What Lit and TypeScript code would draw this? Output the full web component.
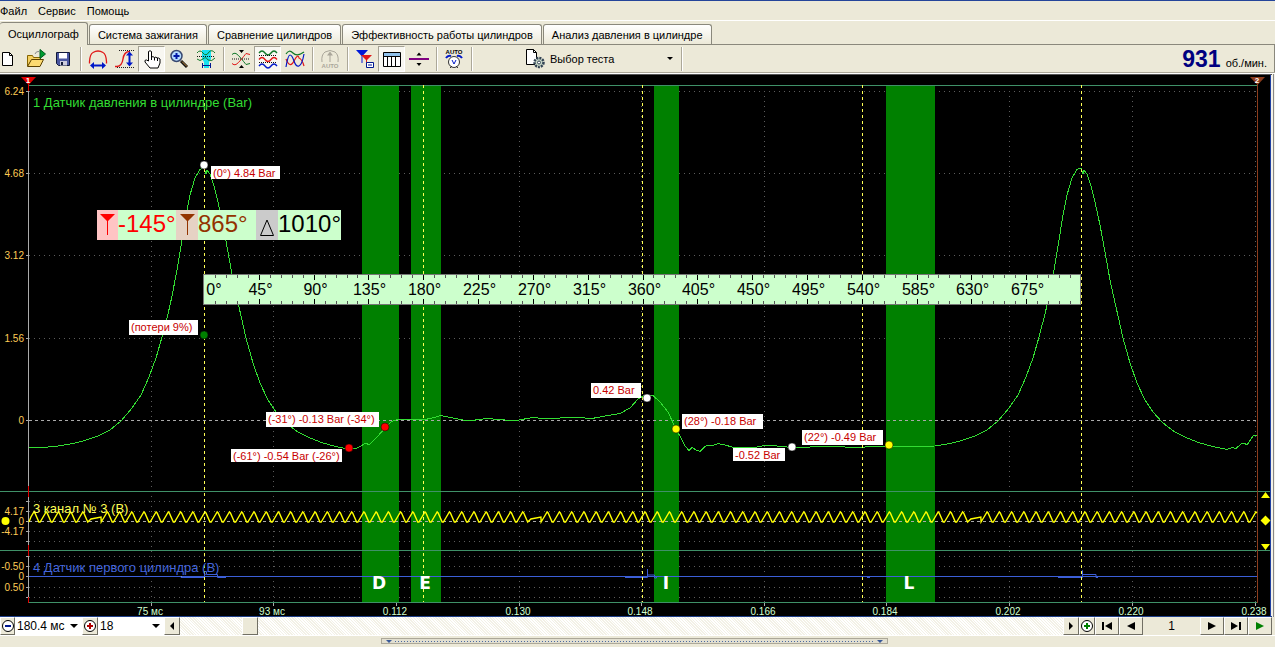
import { LitElement, html, svg, css } from "lit";
import { customElement, state } from "lit/decorators.js";

type Pt = [number, number];

/* Compression peak of one full engine cycle, x measured from the dead centre. */
const PEAK: Pt[] = [
  [-146, 446], [-131, 443.5], [-119, 440.5], [-106, 436], [-94, 430], [-83, 421], [-72, 408],
  [-63, 395], [-55, 377], [-48, 358], [-42, 337], [-36, 314], [-32, 296], [-27, 270], [-22, 240],
  [-18, 215], [-14, 195], [-9, 178], [-4, 169.5], [0, 168], [2, 174], [3, 170], [6, 174], [10, 186],
  [14, 202], [19, 225], [24, 252], [29, 280], [35, 307], [42, 338], [49, 363], [56, 383],
  [64, 400], [72, 412], [82, 423], [94, 432], [106, 438], [119, 443], [132, 446.5],
];
const MID: Pt[] = [
  [343, 448], [356, 448.5], [361, 446], [366, 443], [369, 445], [378, 436], [385, 428], [391, 422],
  [398, 419], [411, 419.5], [423, 420], [432, 418], [441, 415.5], [455, 418.5], [468, 421],
  [487, 418.5], [505, 420], [519, 420], [533, 417.5], [548, 419], [572, 417], [592, 418.5],
  [605, 416], [620, 413.5], [630, 408], [638, 399], [645, 395], [653, 395.5], [660, 402],
  [668, 412], [676, 429], [681, 438], [685, 446], [689, 450.5], [692, 447.5], [696, 450],
  [700, 451.5], [705, 446.5], [709, 445], [712, 446], [718, 443.5], [725, 445], [732, 447],
  [757, 447], [765, 445.5], [777, 446], [792, 447.5], [800, 448], [820, 446], [845, 447],
  [856, 448], [870, 446.5], [886, 446.5],
];
const TAIL: Pt[] = [
  [1227, 449.5], [1232, 447.5], [1236, 448.5], [1241, 444], [1244, 443], [1247, 445], [1253, 436],
  [1257, 435],
];
const shift = (dx: number): Pt[] => PEAK.map(([x, y]) => [x + dx, y]);
const toPoints = (p: Pt[]) => p.map((q) => q.join(",")).join(" ");
const PRESSURE = toPoints([[29, 447], [48, 447], ...shift(204), ...MID, ...shift(1081), ...TAIL]);

/* Toothed wheel signal: one tooth in 36 is missing. */
function wheel(): string {
  const out: Pt[] = [[29, 522]];
  for (let k = -5; k < 96; k++) {
    const p = 95 + k * 12.22;
    if (k % 36 === 0) {
      out.push([p - 4, 519], [p + 6, 517]);
      continue;
    }
    out.push([p - 6, 522], [p - 3, 517], [p, 512], [p + 1, 513], [p + 5, 522]);
  }
  return toPoints(out.filter(([x]) => x >= 29 && x <= 1257));
}
const WHEEL = wheel();

const GRID_X = [151, 273, 396, 519, 641, 764, 886, 1009, 1132, 1255];
const TIMES = ["75 мс", "93 мс", "0.112", "0.130", "0.148", "0.166", "0.184", "0.202", "0.220", "0.238"];
const GRID_Y = [91, 173, 255, 338, 501, 511, 531, 541, 556, 566, 587, 597];
const BANDS = [
  { x: 362, w: 37, name: "D", at: 379 },
  { x: 411, w: 30, name: "E", at: 425 },
  { x: 654, w: 25, name: "I", at: 666 },
  { x: 886, w: 49, name: "L", at: 909 },
];
const AXIS: [number, string][] = [
  [91, "6.24"], [173, "4.68"], [255, "3.12"], [338, "1.56"], [420, "0"],
  [511, "4.17"], [521, "0"], [531, "-4.17"], [566, "-0.50"], [576, "0"], [587, "0.50"],
];
const NOTES = [
  { x: 211, y: 166, w: 69, h: 13, text: "(0°) 4.84 Bar" },
  { x: 129, y: 320, w: 69, h: 15, text: "(потери 9%)" },
  { x: 266, y: 412, w: 113, h: 15, text: "(-31°) -0.13 Bar (-34°)" },
  { x: 231, y: 449, w: 111, h: 13, text: "(-61°) -0.54 Bar (-26°)" },
  { x: 591, y: 383, w: 50, h: 15, text: "0.42 Bar" },
  { x: 682, y: 414, w: 81, h: 15, text: "(28°) -0.18 Bar" },
  { x: 733, y: 448, w: 52, h: 13, text: "-0.52 Bar" },
  { x: 802, y: 430, w: 81, h: 15, text: "(22°) -0.49 Bar" },
];
const DOTS: [number, number, string][] = [
  [204, 165, "white"], [204, 335, "green"], [385, 427, "red"], [349, 448, "red"],
  [647, 398, "white"], [676, 429, "yellow"], [792, 447, "white"], [889, 445, "yellow"],
];

const plainText = css`
  :host { font-family: "Liberation Sans", Arial, sans-serif; }
`;

@customElement("scope-chart")
class ScopeChart extends LitElement {
  static styles = [
    plainText,
    css`
      :host { display: block; background: #000; }
      .plot { display: block; width: 100%; height: auto; }
      .grid { stroke: #5c5c5c; stroke-dasharray: 1 4; }
      .zero { stroke: #aaa; stroke-dasharray: 3 3; }
      .cut { stroke: #ffff55; stroke-dasharray: 3 3; }
      .frame { stroke: #3f9168; }
      .axis { stroke: #aaa; }
      .band { fill: #008000; }
      .pressure { fill: none; stroke: #33dd33; shape-rendering: crispEdges; }
      .wheel { fill: none; stroke: #ffff00; stroke-width: 1.4; }
      .sync { fill: none; stroke: #3c5fd8; }
      .level { font-size: 10px; fill: #ffcc55; text-anchor: end; }
      .time { font-size: 10px; fill: #d0ffd0; text-anchor: middle; }
      .name { font-size: 13px; }
      .letter { font-family: "DejaVu Sans", Verdana, sans-serif; font-size: 17px; font-weight: bold; fill: #fff; text-anchor: middle; }
      .note { font-size: 11px; fill: #c80000; }
      .tick { font-size: 16px; fill: #000; text-anchor: middle; }
      .big { font-size: 24px; }
      .flag { font-size: 8px; font-weight: bold; fill: #fff; text-anchor: middle; }
    `,
  ];

  private ruler() {
    const step = 877 / 80;
    const parts = [];
    for (let i = 1; i < 80; i++) {
      const x = Math.round(204 + i * step) + 0.5;
      const major = i % 5 === 0;
      const len = major ? 5 : 3;
      parts.push(svg`<path d="M${x} 275v${len}M${x} 304v-${len}" stroke=${major ? "#000" : "#555"}></path>`);
      if (major) {
        parts.push(svg`<text class="tick" x=${x + 1} y="295">${i * 9}°</text>`);
      }
    }
    return svg`
      <rect x="203.5" y="274.5" width="877" height="30" fill="#ccffcc" stroke="#777"></rect>
      <text class="tick" x="214" y="295">0°</text>${parts}`;
  }

  render() {
    return html`
      <svg class="plot" viewBox="0 74 1275 543" role="img" aria-label="Осциллограмма">
        <rect x="1270" y="74" width="1" height="543" fill="#2040a0"></rect>
        <rect x="1271" y="74" width="4" height="543" fill="#f4f2e8"></rect>
        <rect x="1273" y="74" width="1" height="543" fill="#888"></rect>
        <rect x="0" y="74" width="1272" height="1" fill="#555"></rect>
        <rect x="0" y="616" width="1272" height="1" fill="#20408a"></rect>
        ${GRID_X.map((x) => svg`<path class="grid" d="M${x + 0.5} 91V602"></path>`)}
        ${GRID_Y.map((y) => svg`<path class="grid" d="M29 ${y + 0.5}H1257"></path>`)}
        ${BANDS.map((b) => svg`<rect class="band" x=${b.x} y="86" width=${b.w} height="516"></rect>`)}
        ${[420, 521, 576].map((y) => svg`<path class="zero" d="M29 ${y + 0.5}H1257"></path>`)}
        <path class="frame" d="M28 85.5H1257M0 491.5H1270M0 550.5H1270M28 602.5H1257"></path>
        <path class="axis" d="M28.5 86V602M26 91.5h3M26 173.5h3M26 255.5h3M26 338.5h3M26 420.5h3M26 501.5h3M26 511.5h3M26 521.5h3M26 531.5h3M26 541.5h3M26 556.5h3M26 566.5h3M26 576.5h3M26 587.5h3M26 597.5h3"></path>
        ${GRID_X.map((x) => svg`<path class="axis" d="M${x + 0.5} 603v3"></path>`)}
        <path d="M28.5 82v9M28.5 486v11M28.5 545v11M28.5 597v6" stroke="#e00000"></path>
        <path d="M1257.5 84V603" stroke="#8c3c1c"></path>

        <polyline class="pressure" points=${PRESSURE}></polyline>
        <polyline class="wheel" points=${WHEEL}></polyline>
        <path class="sync" d="M29 576.5H181v1H204.5v-6h2v3h11v3H226M1058 577.5H1082.5v-7v4H1096v3h2M182 576.5H1257M625 577.5H647.5V569v6h7v3h2v-1.500M867 577.500h3"></path>
        ${[204, 423, 642, 862, 1081].map((x) => svg`<path class="cut" d="M${x + 0.5} 85V602"></path>`)}

        <text class="name" x="33" y="107" fill="#33dd33">1 Датчик давления в цилиндре (Bar)</text>
        <text class="name" x="33" y="513" fill="#ffff55">3 канал № 3 (В)</text>
        <text class="name" x="33" y="572" fill="#4466dd">4 Датчик первого цилиндра (В)</text>
        ${AXIS.map(([y, t]) => svg`<text class="level" x="24" y=${y + 4}>${t}</text>`)}
        ${TIMES.map((t, i) => svg`<text class="time" x=${GRID_X[i] - 1} y="615">${t}</text>`)}
        ${BANDS.map((b) => svg`<text class="letter" x=${b.at} y="589">${b.name}</text>`)}

        ${this.ruler()}
        ${NOTES.map(
          (n) => svg`<rect x=${n.x} y=${n.y} width=${n.w} height=${n.h} fill="#fff"></rect>
            <text class="note" x=${n.x + 2} y=${n.y + 11}>${n.text}</text>`
        )}
        ${DOTS.map(([x, y, c]) => svg`<circle cx=${x} cy=${y} r="4" fill=${c} stroke="#000" stroke-width="0.500"></circle>`)}

        <rect x="97" y="210" width="244" height="30" fill="#ccffcc"></rect>
        <rect x="97" y="210" width="21" height="30" fill="#ffc4c4"></rect>
        <rect x="176" y="210" width="22" height="30" fill="#e6d2c4"></rect>
        <rect x="256" y="210" width="22" height="30" fill="#cbcbcb"></rect>
        <path d="M100 214h15l-7 7v14h-1v-14z" fill="#f00"></path>
        <path d="M180 214h15l-7 7v14h-1v-14z" fill="#933300"></path>
        <path d="M267 220l-6.500 15.500h13z" fill="none" stroke="#000"></path>
        <text class="big" x="118" y="232" fill="#f00">-145°</text>
        <text class="big" x="198" y="232" fill="#933300">865°</text>
        <text class="big" x="278" y="232" fill="#000">1010°</text>

        <path d="M21 77h15l-7.500 8z" fill="#e00000"></path>
        <path d="M1250 77h15l-7.500 8z" fill="#8c3c1c"></path>
        <text class="flag" x="28" y="83">1</text>
        <text class="flag" x="1257" y="83">2</text>
        <circle cx="5.500" cy="521" r="4" fill="#ff0"></circle>
        <path d="M1261 498h9l-4.500-6zM1261 544h9l-4.500 6zM1265.500 515.500l5 5-5 5-5-5z" fill="#ff0"></path>
      </svg>`;
  }
}

const icon = (body: unknown) =>
  html`<svg width="20" height="20" viewBox="0 0 20 20" aria-hidden="true" fill="none">${body}</svg>`;

const ICONS: Record<string, unknown> = {
  fresh: svg`<path d="M3.500 3.500h7l3 3v10h-10z" fill="#fff" stroke="#000"></path><path d="M10.500 3.500v3h3" stroke="#000"></path>`,
  open: svg`<path d="M1.500 17V6.500h5l1 2h7V11" fill="#f5d060" stroke="#866500"></path><path d="M1.500 17.500l4-7h12l-3.500 7z" fill="#fbd970" stroke="#5a4000"></path><path d="M14 0.500l5.500 4.500-5.500 4.500z" fill="#009c30" stroke="#005c20"></path><path d="M9 5q1-3 4-2.500" stroke="#888"></path>`,
  save: svg`<path d="M3.500 3.500h13v13h-11l-2-2z" fill="#4a56a0" stroke="#101838"></path><path d="M6 4h8v5.500H6z" fill="#fff"></path><path d="M7 12h7v4.500H7z" fill="#ccd"></path><path d="M8 13h2v3H8z" fill="#101838"></path>`,
  spanX: svg`<path d="M1.500 14.500v-2Q2 5 5 3.500Q10 .5 15 3.500Q18 5 18.500 12.500v2" stroke="#e01818" stroke-width="1.300"></path><path d="M4 16.500h12" stroke="#0018c8" stroke-width="2"></path><path d="M2 16.500l4-3.500v7zM18 16.500l-4-3.500v7z" fill="#0018c8"></path>`,
  spanY: svg`<path d="M0 17.500h2Q7 17 8 10T14 2.500h1" stroke="#e01818" stroke-width="1.400"></path><path d="M4 1.500h16M2 18.500h18" stroke="#222" stroke-dasharray="1 1"></path><path d="M14.500 5v10" stroke="#0018c8" stroke-width="2"></path><path d="M14.500 2.500l3.500 4h-7zM14.500 17.500l3.500-4h-7z" fill="#0018c8"></path>`,
  hand: svg`<path d="M6.500 12V2.500q1.500-1.500 3 0V8q1.500-1 3 .5q1.500-1 2.500 .5q1.500-.5 3 1V14l-2 5H8L3 13q-.5-2.500 1.500-2z" fill="#fff" stroke="#000"></path><path d="M9.500 7v4M12.500 8.500v3M15.500 9v3" stroke="#000"></path>`,
  zoom: svg`<path d="M12 12l6 6" stroke="#111" stroke-width="3"></path><path d="M13 12.500l5 5" stroke="#c89040"></path><circle cx="7.500" cy="7" r="5.500" fill="#b4dcff" stroke="#384870" stroke-width="1.500"></circle><path d="M4.500 7h6M7.500 4v6" stroke="#0018a8" stroke-width="2"></path>`,
  fit: svg`<path d="M6 1h9v9l-2 3v6H8v-6l-2-3z" fill="#18e0f0"></path><path d="M1 4q3-4 6 0t6-1q3-3 6 1" stroke="#107828"></path><path d="M1 7.500h18" stroke="#111" stroke-dasharray="1 1"></path><path d="M1 10q3 3 6 0t5 1q4 2 7-2" stroke="#107828"></path><path d="M6.500 14v5M14.500 14v5M7 16.500h7" stroke="#001890"></path>`,
  cross: svg`<path d="M1 5.500q2-2 4-1t6 6t4 5t4-1" stroke="#107828"></path><path d="M1 14.500q2 2 4 1t6-6t4-5t4 1" stroke="#e01818"></path><path d="M1 10h18" stroke="#111" stroke-dasharray="1 1"></path><path d="M8 1h5l-2.500 3zM8 19h5l-2.500-3z" fill="#000"></path>`,
  waves: svg`<path d="M1 4q3-4 6 0t6 0t6 0" stroke="#107828" stroke-width="1.300"></path><path d="M1 10.500q3-4 6 0t6 0t6 0" stroke="#e01818" stroke-width="1.300"></path><path d="M1 17q3-4 6 0t6 0t6 0" stroke="#0018c8" stroke-width="1.300"></path><path d="M1 6.500h18M1 13.500h18" stroke="#111" stroke-dasharray="1 1"></path>`,
  overlap: svg`<path d="M1 5q3-5 7-1t11-1" stroke="#107828" stroke-width="1.200"></path><path d="M1 10q4 10 8 2t5-3q3 1 5 8" stroke="#e01818" stroke-width="1.200"></path><path d="M1 18q2-12 4-12t4 6t5 5t5-12" stroke="#0018c8" stroke-width="1.200"></path>`,
  auto: svg`<path d="M2 13Q1 6 5 3Q10 0 15 3Q19 6 18 13M10 4v9" stroke="#aaa69a"></path><path d="M10 2.500l-3 4h6z" fill="#aaa69a"></path><text class="tiny dim" x="10" y="19">AUTO</text>`,
  cursors: svg`<path d="M1 1h12L7.500 7v7h-1V7z" fill="#0018d8"></path><path d="M6 6h11l-5 5v5h-1v-5z" fill="#e01818"></path><path d="M11.500 13.500h7v5h-7z" fill="#fff" stroke="#001890"></path><path d="M13 16h4" stroke="#001890"></path>`,
  table: svg`<path d="M1.500 3.500h17v14h-17z" fill="#fff" stroke="#000"></path><path d="M2 4h16v3H2z" fill="#8fc0ea"></path><path d="M1 7.500h18M5.500 7v10M9.500 7v10M13.500 7v10" stroke="#000"></path>`,
  split: svg`<path d="M0 10h20" stroke="#800080" stroke-width="2"></path><path d="M7.500 6.500h5L10 3.500zM7.500 14h5l-2.500 3z" fill="#000"></path>`,
  clock: svg`<circle cx="10" cy="13" r="5.500" fill="#fff" stroke="#333"></circle><path d="M8 11l2 4 2-4" stroke="#0018c8"></path><path d="M2 9q2-3 5-2M18 9q-2-3-5-2" stroke="#0018c8" stroke-width="2"></path><text class="tiny" x="10" y="5">AUTO</text><path d="M6 19l2-2M14 19l-2-2" stroke="#333"></path>`,
  test: svg`<path d="M1.500 .5h7l3 3v12h-10z" fill="#fff" stroke="#000"></path><path d="M8.500 .5v3h3" stroke="#000"></path><circle cx="14" cy="13.500" r="4.500" fill="#c8d8c8" stroke="#345" stroke-width="2.500" stroke-dasharray="2 1"></circle><circle cx="14" cy="13.500" r="1.500" fill="#fff" stroke="#345"></circle>`,
  minus: svg`<circle cx="10" cy="10" r="5.500" fill="#fff" stroke="#000"></circle><path d="M7 10h6" stroke="#001890" stroke-width="2"></path>`,
  plusRed: svg`<circle cx="10" cy="10" r="5.500" fill="#fff" stroke="#000"></circle><path d="M7 10h6M10 7v6" stroke="#b00000" stroke-width="2"></path>`,
  plusGreen: svg`<circle cx="10" cy="10" r="5.500" fill="#fff" stroke="#000"></circle><path d="M7 10h6M10 7v6" stroke="#008000" stroke-width="2"></path>`,
  left: svg`<path d="M12 6v8l-4-4z" fill="#000"></path>`,
  right: svg`<path d="M8 6v8l4-4z" fill="#000"></path>`,
  first: svg`<path d="M5 6h2v8H5zM15 6v8l-7-4z" fill="#000"></path>`,
  prev: svg`<path d="M14 6v8l-8-4z" fill="#000"></path>`,
  next: svg`<path d="M6 6v8l8-4z" fill="#000"></path>`,
  last: svg`<path d="M13 6h2v8h-2zM5 6v8l7-4z" fill="#000"></path>`,
  play: svg`<path d="M6 6v8l8-4z" fill="#008000"></path>`,
};

const TOOLS: { id: string; label: string }[][] = [
  [{ id: "fresh", label: "Новый" }, { id: "open", label: "Открыть" }, { id: "save", label: "Сохранить" }],
  [
    { id: "spanX", label: "Растянуть по времени" },
    { id: "spanY", label: "Растянуть по уровню" },
    { id: "hand", label: "Перемещение" },
    { id: "zoom", label: "Увеличить" },
    { id: "fit", label: "Вписать" },
  ],
  [{ id: "cross", label: "Совместить нули" }, { id: "waves", label: "Раздельно" }, { id: "overlap", label: "Совмещённо" }],
  [{ id: "auto", label: "Авто" }],
  [{ id: "cursors", label: "Маркеры" }, { id: "table", label: "Таблица" }, { id: "split", label: "Разделить" }],
  [{ id: "clock", label: "Автозапуск" }],
];
const TABS = [
  "Осциллограф",
  "Система зажигания",
  "Сравнение цилиндров",
  "Эффективность работы цилиндров",
  "Анализ давления в цилиндре",
];

@customElement("app-root")
class AppRoot extends LitElement {
  static styles = [
    plainText,
    css`
      :host { display: block; min-height: 100vh; background: #ece9d8; color: #000; font-size: 12px; line-height: 16px; }
      * { box-sizing: border-box; }
      button, select, input { font: inherit; color: inherit; margin: 0; padding: 0; border: 0; background: none; border-radius: 0; }
      svg { flex: none; }
      .menu { display: flex; gap: 11px; height: 21px; align-items: center; border-top: 1px solid #24459a; border-bottom: 1px solid #fff; font-size: 11px; }
      .tabs { display: flex; align-items: flex-end; gap: 1px; height: 24px; border-bottom: 1px solid #8a887c; }
      .tab { height: 20px; padding: 0 8px; border: 1px solid #8a887c; border-bottom: 0; border-radius: 3px 3px 0 0; background: linear-gradient(#fff, #ece9d8); white-space: nowrap; font-size: 11px; }
      .tab.active { height: 23px; margin-bottom: -1px; border-left: 0; background: #ece9d8; }
      .tools { display: flex; align-items: center; height: 27px; border-right: 1px solid #8a887c; }
      .group { display: flex; }
      .group.lead { margin-left: -5px; }
      .tool { display: flex; width: 27px; height: 26px; align-items: center; justify-content: center; }
      .tool.on { background: #f8f7f1; border: 1px solid; border-color: #a5a294 #fff #fff #a5a294; }
      .rule { width: 8px; height: 24px; background: linear-gradient(90deg, transparent 4px, #aca899 4px, #aca899 5px, #fff 5px, #fff 6px, transparent 6px); }
      .test { display: flex; align-items: center; gap: 5px; margin-left: 50px; font-size: 11px; }
      .pick { display: flex; align-items: center; position: relative; }
      .pick select { appearance: none; width: 100%; }
      .pick::after { content: ""; position: absolute; right: 4px; border: 4px solid transparent; border-top-color: #000; border-bottom: 0; pointer-events: none; }
      .test .pick { width: 127px; }
      .test .pick::after { border-width: 3px; border-bottom: 0; }
      .rpm { margin-left: auto; display: flex; align-items: baseline; gap: 5px; padding-right: 7px; font-size: 11px; }
      .rpm b { color: #000080; font-size: 23px; line-height: 26px; }
      .edge { height: 2px; background: #aca899; border-bottom: 1px solid #fff; }
      .foot { display: flex; height: 18px; align-items: stretch; margin-right: 3px; }
      .key { display: flex; align-items: center; justify-content: center; width: 16px; overflow: hidden; background: #ece9d8; border: 1px solid; border-color: #fff #716f64 #716f64 #fff; }
      .key.wide { width: 24px; }
      .foot .pick { background: #fff; width: 67px; padding-left: 2px; }
      .foot .pick.next { width: 66px; }
      .key.zoomout { width: 15px; }
      .page { width: 57px; text-align: center; line-height: 18px; }
      .scroll { appearance: none; flex: 1; min-width: 0; background: repeating-linear-gradient(45deg, #fff 0 1px, #f3f1e6 1px 2px); }
      .scroll::-webkit-slider-thumb { appearance: none; width: 16px; height: 18px; background: #ece9d8; border: 1px solid; border-color: #fff #716f64 #716f64 #fff; }
      .split { display: flex; justify-content: center; border-top: 1px solid #fff; padding: 2px 6px 0 0; }
      .grip { display: flex; width: 40%; height: 6px; align-items: center; justify-content: space-between; gap: 3px; padding: 0 4px; border: 1px solid #aca899; background: #e2dfd0; }
      .grip i { border: 3px solid transparent; border-top-color: #3a5a98; border-bottom: 0; }
      .grip span { flex: 1; height: 1px; background: repeating-linear-gradient(90deg, #4a6aa0 0 1px, transparent 1px 3px); }
      .tiny { font-size: 6px; font-weight: bold; text-anchor: middle; fill: #000; }
      .tiny.dim { fill: #aaa69a; }
    `,
  ];

  @state() private tab = 0;
  @state() private pressed = new Set(["hand", "waves", "table"]);

  private toggle(id: string) {
    const next = new Set(this.pressed);
    next.has(id) ? next.delete(id) : next.add(id);
    this.pressed = next;
  }

  private key(id: string, label: string, extra = "") {
    return html`<button class="key ${extra}" aria-label=${label}>${icon(ICONS[id])}</button>`;
  }

  render() {
    return html`
      <nav class="menu"><button>Файл</button><button>Сервис</button><button>Помощь</button></nav>
      <div class="tabs" role="tablist">
        ${TABS.map(
          (t, i) => html`<button role="tab" aria-selected=${i === this.tab} class="tab ${i === this.tab ? "active" : ""}"
            @click=${() => (this.tab = i)}>${t}</button>`
        )}
      </div>
      <div class="tools">
        ${TOOLS.map(
          (g, i) => html`<div class="group ${i === 0 ? "lead" : ""}">
              ${g.map(
                (t) => html`<button class="tool ${this.pressed.has(t.id) ? "on" : ""}" aria-label=${t.label}
                  @click=${() => this.toggle(t.id)}>${icon(ICONS[t.id])}</button>`
              )}
            </div>
            <div class="rule"></div>`
        )}
        <div class="test">
          ${icon(ICONS.test)}
          <div class="pick"><select aria-label="Тест"><option>Выбор теста</option></select></div>
        </div>
        <div class="rule"></div>
        <div class="rpm"><b>931</b><span>об./мин.</span></div>
      </div>
      <div class="edge"></div>
      <scope-chart></scope-chart>
      <div class="foot">
        ${this.key("minus", "Сжать", "zoomout")}
        <div class="pick"><select aria-label="Развёртка"><option>180.4 мс</option></select></div>
        ${this.key("plusRed", "Растянуть")}
        <div class="pick next"><select aria-label="Масштаб"><option>18</option></select></div>
        ${this.key("left", "Влево")}
        <input class="scroll" type="range" min="0" max="1000" value="72" aria-label="Прокрутка" />
        ${this.key("right", "Вправо")}
        ${this.key("plusGreen", "Добавить")}
        ${this.key("first", "В начало", "wide")}
        ${this.key("prev", "Назад", "wide")}
        <div class="page">1</div>
        ${this.key("next", "Вперёд", "wide")}
        ${this.key("last", "В конец", "wide")}
        ${this.key("play", "Пуск", "wide")}
      </div>
      <div class="split"><div class="grip"><i></i><span></span><i></i></div></div>
    `;
  }
}
